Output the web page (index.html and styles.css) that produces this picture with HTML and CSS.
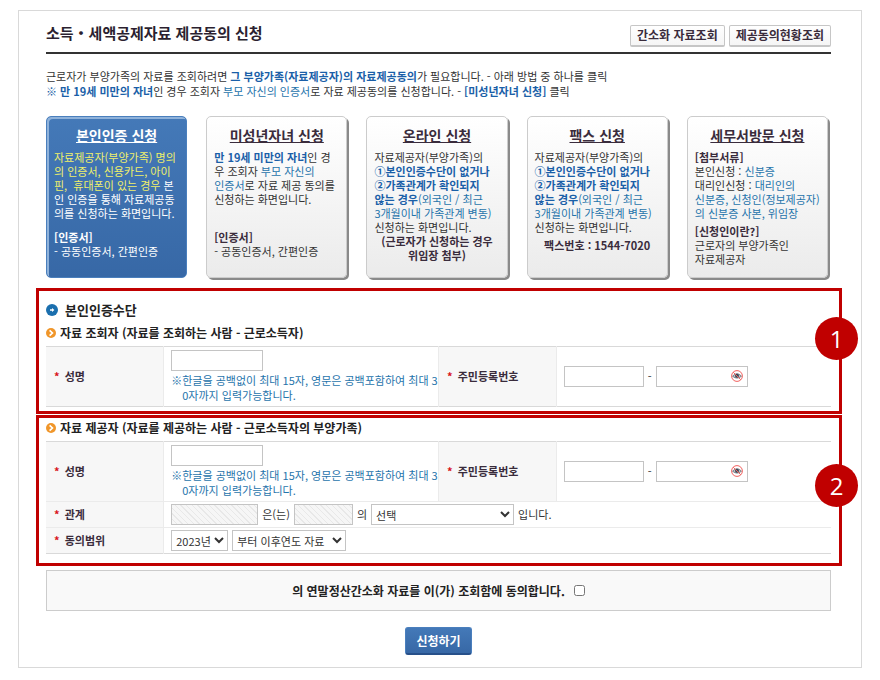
FILE: index.html
```html
<!DOCTYPE html>
<html lang="ko">
<head>
  <meta charset="UTF-8"/>
  <meta name="viewport" content="width=device-width, initial-scale=1.0"/>
  <title>소득・세액공제자료 제공동의 신청</title>
  <link rel="stylesheet" href="styles.css">
</head>
<body>

<main class="page">
  <header class="page-head">
    <h1>소득・세액공제자료 제공동의 신청</h1>
    <div class="head-buttons">
      <button type="button">간소화 자료조회</button>
      <button type="button">제공동의현황조회</button>
    </div>
  </header>

  <div class="intro">
    <p>근로자가 부양가족의 자료를 조회하려면 <strong>그 부양가족(자료제공자)의 자료제공동의</strong>가 필요합니다. - 아래 방법 중 하나를 클릭</p>
    <p><strong>※ 만 19세 미만의 자녀</strong>인 경우 조회자 <span class="blue">부모 자신의 인증서</span>로 자료 제공동의를 신청합니다. - <strong>[미성년자녀 신청]</strong> 클릭</p>
  </div>

  <div class="cards">
    <section class="card active">
      <h2><a href="#self">본인인증 신청</a></h2>
      <p class="desc"><span class="yellow">자료제공자(부양가족) 명의<br>의 인증서, 신용카드, 아이<br>핀,&nbsp; 휴대폰이 있는 경우</span> 본<br>인 인증을 통해 자료제공동<br>의를 신청하는 화면입니다.</p>
      <p><b>[인증서]</b><br>- 공동인증서, 간편인증</p>
    </section>
    <section class="card">
      <h2><a href="#minor">미성년자녀 신청</a></h2>
      <p class="desc"><strong>만 19세 미만의 자녀</strong>인 경<br>우 조회자 <span class="blue">부모 자신의<br>인증서</span>로 자료 제공 동의를<br>신청하는 화면입니다.</p>
      <p><b>[인증서]</b><br>- 공동인증서, 간편인증</p>
    </section>
    <section class="card">
      <h2><a href="#online">온라인 신청</a></h2>
      <p>자료제공자(부양가족)의<br><strong>①본인인증수단이 없거나<br>②가족관계가 확인되지<br>않는 경우</strong><span class="blue">(외국인 / 최근<br>3개월이내 가족관계 변동)</span><br>신청하는 화면입니다.</p>
      <p class="center"><b>(근로자가 신청하는 경우<br>위임장 첨부)</b></p>
    </section>
    <section class="card">
      <h2><a href="#fax">팩스 신청</a></h2>
      <p>자료제공자(부양가족)의<br><strong>①본인인증수단이 없거나<br>②가족관계가 확인되지<br>않는 경우</strong><span class="blue">(외국인 / 최근<br>3개월이내 가족관계 변동)</span><br>신청하는 화면입니다.</p>
      <p class="center spaced"><b>팩스번호 : 1544-7020</b></p>
    </section>
    <section class="card">
      <h2><a href="#visit">세무서방문 신청</a></h2>
      <p><b>[첨부서류]</b><br>본인신청 : <span class="blue">신분증</span><br>대리인신청 : <span class="blue">대리인의<br>신분증, 신청인(정보제공자)<br>의 신분증 사본, 위임장</span></p>
      <p class="spaced"><b>[신청인이란?]</b><br>근로자의 부양가족인<br>자료제공자</p>
    </section>
  </div>

  <form onsubmit="return false">
    <section class="step step-viewer">
      <span class="badge">1</span>
      <h2>
        <svg width="12" height="12" viewBox="0 0 12 12" aria-hidden="true">
          <circle cx="6" cy="6" r="6" fill="#1b6fae"/>
          <path d="M4 5.3h2V4l2.4 2L6 8V6.700H4z" fill="#fff"/>
        </svg>
        본인인증수단
      </h2>
      <h3>
        <svg width="10" height="10" viewBox="0 0 10 10" aria-hidden="true">
          <circle cx="5" cy="5" r="5" fill="#f0962a"/>
          <path d="M3.6 2.4 6.4 5 3.6 7.6" fill="none" stroke="#fff" stroke-width="1.7"/>
        </svg>
        자료 조회자 (자료를 조회하는 사람 - 근로소득자)
      </h3>
      <table>
        <tr class="tall">
          <th><label for="viewerName"><i>*</i> 성명</label></th>
          <td>
            <input type="text" id="viewerName" class="w-name">
            <p class="hint">※한글을 공백없이 최대 15자, 영문은 공백포함하여 최대 3<br>0자까지 입력가능합니다.</p>
          </td>
          <th class="mid"><label for="viewerId1"><i>*</i> 주민등록번호</label></th>
          <td>
            <div class="row">
              <input type="text" id="viewerId1" class="w-id">
              <span>-</span>
              <span class="secret">
                <input type="password" class="w-name" aria-label="주민등록번호 뒷자리">
                <button type="button" aria-label="보안 입력">
                  <svg width="12" height="12" viewBox="0 0 12 12">
                    <path d="M1.5 6.2Q6 1.2 10.5 6.2 6 10 1.5 6.2z" fill="#b9c0c8" stroke="#5c6670" stroke-width=".8"/>
                    <circle cx="6" cy="5.8" r="2" fill="#3f4b57"/>
                    <circle cx="6" cy="6" r="5.4" fill="none" stroke="#f0615f" stroke-width="1"/>
                    <path d="M2.200 2.200 9.800 9.800" stroke="#f0615f" stroke-width="1"/>
                  </svg>
                </button>
              </span>
            </div>
          </td>
        </tr>
      </table>
    </section>

    <section class="step step-provider">
      <span class="badge">2</span>
      <h3>
        <svg width="10" height="10" viewBox="0 0 10 10" aria-hidden="true">
          <circle cx="5" cy="5" r="5" fill="#f0962a"/>
          <path d="M3.6 2.4 6.4 5 3.6 7.6" fill="none" stroke="#fff" stroke-width="1.7"/>
        </svg>
        자료 제공자 (자료를 제공하는 사람 - 근로소득자의 부양가족)
      </h3>
      <table>
        <tr class="tall">
          <th><label for="providerName"><i>*</i> 성명</label></th>
          <td>
            <input type="text" id="providerName" class="w-name">
            <p class="hint">※한글을 공백없이 최대 15자, 영문은 공백포함하여 최대 3<br>0자까지 입력가능합니다.</p>
          </td>
          <th class="mid"><label for="providerId1"><i>*</i> 주민등록번호</label></th>
          <td>
            <div class="row">
              <input type="text" id="providerId1" class="w-id">
              <span>-</span>
              <span class="secret">
                <input type="password" class="w-name" aria-label="주민등록번호 뒷자리">
                <button type="button" aria-label="보안 입력">
                  <svg width="12" height="12" viewBox="0 0 12 12">
                    <path d="M1.5 6.2Q6 1.2 10.5 6.2 6 10 1.5 6.2z" fill="#b9c0c8" stroke="#5c6670" stroke-width=".8"/>
                    <circle cx="6" cy="5.8" r="2" fill="#3f4b57"/>
                    <circle cx="6" cy="6" r="5.4" fill="none" stroke="#f0615f" stroke-width="1"/>
                    <path d="M2.200 2.200 9.800 9.800" stroke="#f0615f" stroke-width="1"/>
                  </svg>
                </button>
              </span>
            </div>
          </td>
        </tr>
        <tr>
          <th><label for="relation"><i>*</i> 관계</label></th>
          <td colspan="3">
            <div class="row">
              <input type="text" class="w-who" aria-label="제공자 성명" disabled>
              <span>은(는)</span>
              <input type="text" class="w-whom" aria-label="조회자 성명" disabled>
              <span>의</span>
              <select id="relation" class="w-relation"><option>선택</option></select>
              <span>입니다.</span>
            </div>
          </td>
        </tr>
        <tr>
          <th><label for="year"><i>*</i> 동의범위</label></th>
          <td colspan="3">
            <div class="row">
              <select id="year" class="w-year"><option>2023년</option></select>
              <select class="w-range" aria-label="동의 기간"><option>부터 이후연도 자료</option></select>
            </div>
          </td>
        </tr>
      </table>
    </section>

    <div class="agree">
      <label for="agree">의 연말정산간소화 자료를 이(가) 조회함에 동의합니다.</label>
      <input type="checkbox" id="agree">
    </div>

    <div class="submit">
      <button type="submit">신청하기</button>
    </div>
  </form>
</main>

</body>
</html>
```
FILE: styles.css
```css
* {
  box-sizing: border-box;
}

body {
  margin: 0;
  padding: 10px 18px;
  background: #fff;
  color: #333;
  font: 11px/15px "Noto Sans CJK KR", sans-serif;
}

h1, h2, h3, p {
  margin: 0;
}

button, input, select {
  font: inherit;
  color: inherit;
}

strong {
  color: #1a5fa8;
}

b {
  color: #3a2c3c;
}

.blue {
  color: #1f74ab;
}

.page {
  border: 1px solid #d9d9d9;
  padding: 0 30px 12px 27px;
}

/* title bar */
.page-head {
  display: flex;
  justify-content: space-between;
  align-items: center;
  height: 43px;
  padding-top: 8px;
  border-bottom: 2px solid #333;
}

.page-head h1 {
  font-size: 15px;
  line-height: 20px;
  color: #2b1f30;
  padding-bottom: 6px;
}

.head-buttons {
  display: flex;
  gap: 4px;
}

.head-buttons button {
  height: 22px;
  padding: 0 6px;
  border: 1px solid #c6c6c6;
  border-bottom-width: 2px;
  border-radius: 2px;
  background: linear-gradient(#fff, #f5f5f5);
  color: #3a2c3c;
  font-size: 12px;
  font-weight: bold;
  line-height: 18px;
}

.intro {
  padding: 15px 0 17px;
}

/* application methods */
.cards {
  display: grid;
  grid-template-columns: repeat(5, minmax(0, 1fr));
  gap: 19px;
  padding-right: 3px;
}

.card {
  min-height: 162px;
  padding: 8px 0 8px 7px;
  border: 1px solid #ccc;
  border-radius: 5px;
  background: linear-gradient(#fff, #ebebeb);
  box-shadow: 2px 2px 0 #8a8a8a;
  line-height: 14px;
  white-space: nowrap;
}

.card h2 {
  margin: 0 7px 5px 0;
  font-size: 14px;
  line-height: 20px;
  text-align: center;
}

.card h2 a {
  color: #3a2c3c;
}

.card .desc {
  min-height: 80px;
}

.card .center {
  margin-right: 7px;
  text-align: center;
}

.card .spaced {
  margin-top: 4px;
}

.card.active {
  border-color: #4a7fbd;
  background: linear-gradient(#4479b8, #3768a6);
  box-shadow: inset 2px 2px 0 #8fb2da;
  color: #fff;
}

.card.active h2 a,
.card.active b {
  color: #fff;
}

.card .yellow {
  color: #f0f06a;
}

/* numbered form steps */
.step {
  position: relative;
  margin: 0 -11px 1px -10px;
  padding: 0 8px 0 7px;
  border: 3px solid #c00000;
}

.step-viewer {
  margin-top: 10px;
  padding-top: 9px;
  padding-bottom: 4px;
}

.step-provider {
  padding-top: 2px;
  padding-bottom: 9px;
}

.step h2,
.step h3 {
  display: flex;
  align-items: center;
  color: #222;
}

.step h2 {
  gap: 7px;
  margin-bottom: 5px;
  font-size: 13px;
  line-height: 20px;
}

.step h3 {
  gap: 4px;
  margin-bottom: 5px;
  font-size: 12px;
  line-height: 16px;
}

.badge {
  position: absolute;
  top: 26px;
  right: -19px;
  width: 43px;
  height: 43px;
  border-radius: 50%;
  background: #c00000;
  color: #fff;
  font: 24px/43px "Open Sans", sans-serif;
  text-align: center;
}

.step-provider .badge {
  top: 46px;
}

table {
  width: 100%;
  table-layout: fixed;
  border-collapse: collapse;
  border-top: 1px solid #d9d9d9;
  border-bottom: 1px solid #d9d9d9;
}

tr + tr {
  border-top: 1px solid #ebebeb;
}

tr {
  height: 26px;
}

.tall {
  height: 60px;
}

th {
  width: 15%;
  padding: 0 8px;
  border-right: 1px solid #ebebeb;
  background: #f7f7f7;
  color: #3a2c3c;
  text-align: left;
}

th.mid {
  border-left: 1px solid #ebebeb;
}

th i {
  margin-right: 2px;
  color: #d8131b;
  font-style: normal;
}

td {
  padding: 2px 0 2px 7px;
}

td input,
td select {
  display: block;
  height: 21px;
  margin: 0;
  padding: 0 3px;
  border: 1px solid #c4c4c4;
  border-radius: 0;
  background: #fff;
}

td select {
  padding: 0;
}

td input:disabled {
  background: repeating-linear-gradient(45deg, #f6f6f6 0 3px, #e8e8e8 3px 4px);
}

.row {
  display: flex;
  align-items: center;
  gap: 4px;
}

.w-name { width: 92px; }
.w-id { width: 80px; }
.w-who { width: 87px; }
.w-whom { width: 59px; }
.w-relation { width: 143px; }
.w-year { width: 57px; }
.w-range { width: 114px; }

.hint {
  padding: 2px 0 0 11px;
  color: #1f74ab;
  text-indent: -11px;
  white-space: nowrap;
}

.secret {
  position: relative;
}

.secret button {
  position: absolute;
  top: 4px;
  right: 5px;
  display: flex;
  padding: 0;
  border: 0;
  background: none;
}

.agree {
  display: flex;
  justify-content: center;
  align-items: center;
  gap: 9px;
  min-height: 41px;
  margin-top: 4px;
  border: 1px solid #ccc;
  background: #f9f9f9;
  color: #222;
  font-size: 12px;
  font-weight: bold;
}

.agree input {
  width: 11px;
  height: 11px;
  margin: 0;
}

.submit {
  display: flex;
  justify-content: center;
  padding-top: 16px;
}

.submit button {
  height: 28px;
  padding: 0 10px;
  border: 1px solid #4a7fbd;
  border-bottom: 2px solid #27508a;
  border-radius: 3px;
  background: linear-gradient(#4479b8, #3768a6);
  color: #fff;
  font-size: 12px;
  font-weight: bold;
}
```
